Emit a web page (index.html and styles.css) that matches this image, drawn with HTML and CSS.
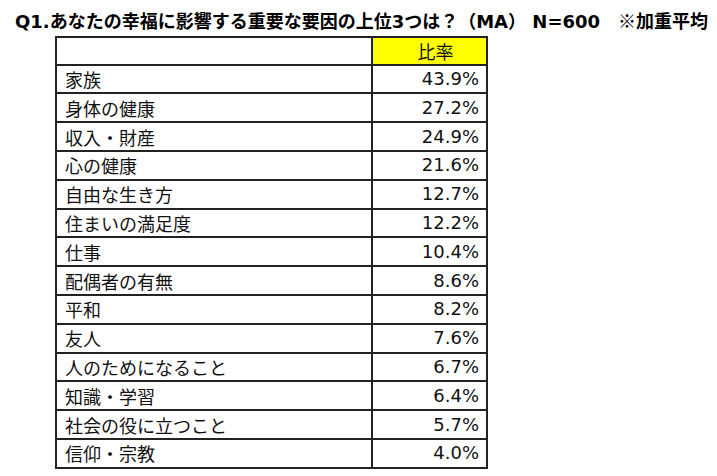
FILE: index.html
```html
<!DOCTYPE html>
<html lang="ja">
<head>
<meta charset="utf-8">
<title>Q1</title>
<link rel="stylesheet" href="styles.css">
</head>
<body>
<h1 class="title"><span class="lat">Q1.</span>あなたの幸福に影響する重要な要因の上位<span class="lat">3</span>つは？（<span class="lat">MA</span>）<span class="lat"> N=600</span>　※加重平均</h1>
<div class="table">
  <div class="cell head-blank"></div>
  <div class="cell head-rate">比率</div>
  <div class="cell label">家族</div><div class="cell val">43.9%</div>
  <div class="cell label">身体の健康</div><div class="cell val">27.2%</div>
  <div class="cell label">収入・財産</div><div class="cell val">24.9%</div>
  <div class="cell label">心の健康</div><div class="cell val">21.6%</div>
  <div class="cell label">自由な生き方</div><div class="cell val">12.7%</div>
  <div class="cell label">住まいの満足度</div><div class="cell val">12.2%</div>
  <div class="cell label">仕事</div><div class="cell val">10.4%</div>
  <div class="cell label">配偶者の有無</div><div class="cell val">8.6%</div>
  <div class="cell label">平和</div><div class="cell val">8.2%</div>
  <div class="cell label">友人</div><div class="cell val">7.6%</div>
  <div class="cell label">人のためになること</div><div class="cell val">6.7%</div>
  <div class="cell label">知識・学習</div><div class="cell val">6.4%</div>
  <div class="cell label">社会の役に立つこと</div><div class="cell val">5.7%</div>
  <div class="cell label">信仰・宗教</div><div class="cell val">4.0%</div>
</div>
</body>
</html>
```
FILE: styles.css
```css
html, body {
  margin: 0;
  padding: 0;
  background: #ffffff;
}
body {
  width: 717px;
  height: 476px;
  overflow: hidden;
  font-family: "Noto Sans CJK JP", sans-serif;
  color: #111111;
}
.lat {
  font-family: "DejaVu Sans", "Noto Sans CJK JP", sans-serif;
}
.title {
  margin: 8px 0 0 0;
  padding-left: 15px;
  font-size: 18px;
  line-height: 24px;
  font-weight: bold;
  color: #000000;
  white-space: nowrap;
}
.table {
  margin: 2px 0 0 55px;
  width: 433px;
  box-sizing: border-box;
  display: grid;
  grid-template-columns: 314px 113px;
  grid-template-rows: 25.7px repeat(14, 26.8px);
  gap: 2px;
  padding: 2px;
  background: #222222;
}
.cell {
  background: #ffffff;
  font-size: 18px;
  line-height: 26px;
  display: flex;
  align-items: center;
  overflow: hidden;
  white-space: nowrap;
}
.label {
  padding-left: 8px;
}
.val {
  justify-content: flex-end;
  padding-right: 7px;
  font-family: "DejaVu Sans", "Noto Sans CJK JP", sans-serif;
}
.head-rate {
  background: #ffff00;
  justify-content: center;
  padding-left: 12px;
}
```
